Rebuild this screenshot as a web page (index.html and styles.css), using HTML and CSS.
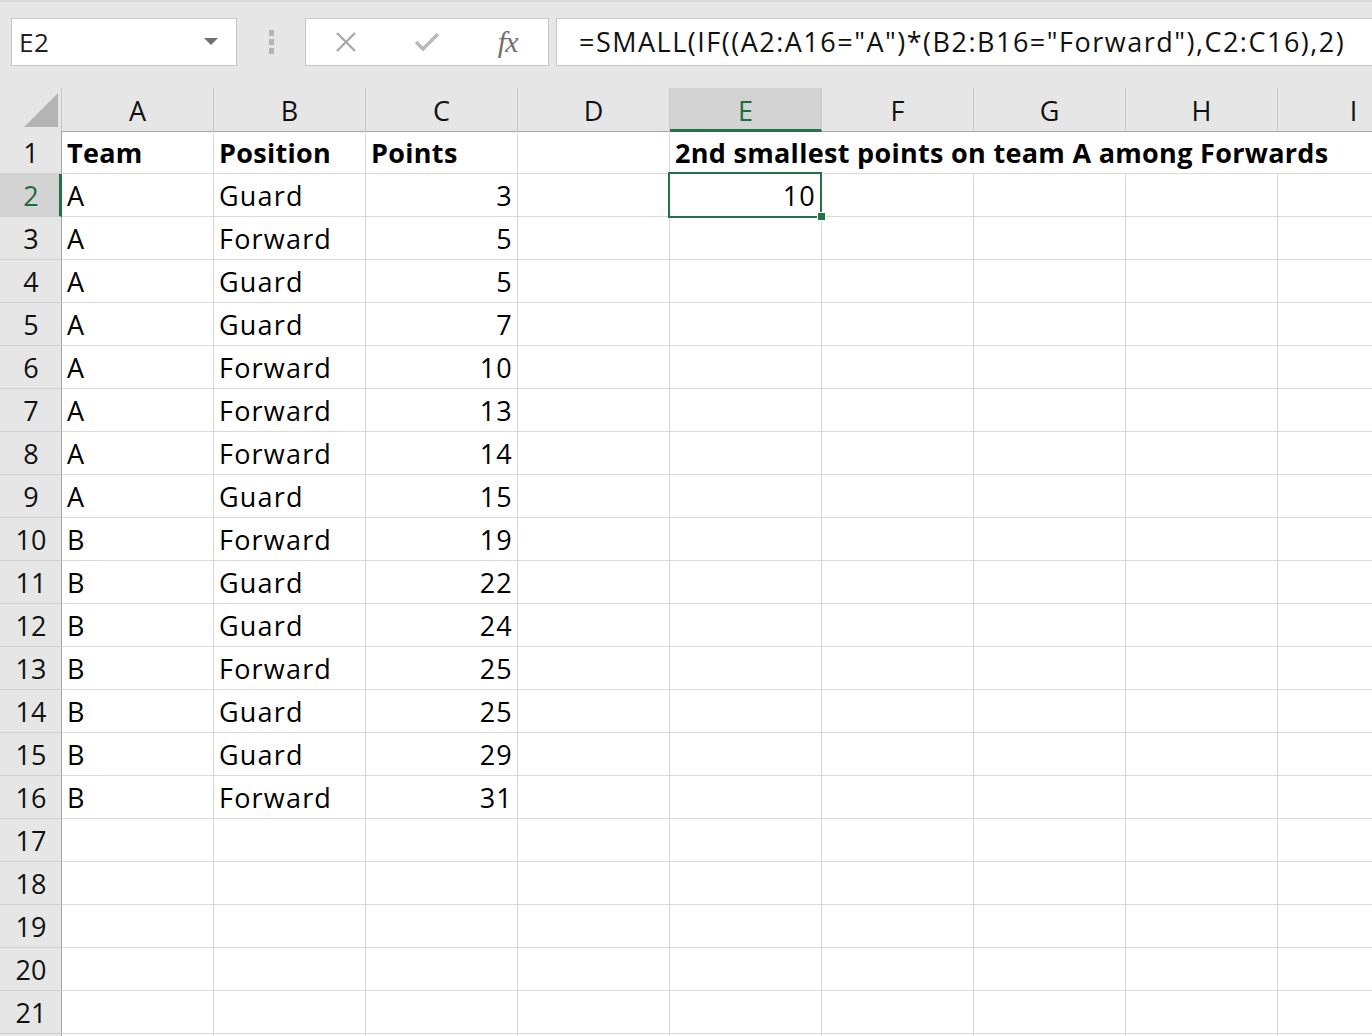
FILE: index.html
```html
<!DOCTYPE html>
<html>
<head>
<meta charset="utf-8">
<link rel="stylesheet" href="styles.css">
</head>
<body>
<div class="toolbar">
  <div class="namebox"><span class="nb-text">E2</span><svg class="nb-arrow" width="14" height="8" viewBox="0 0 14 8"><path d="M0 0 H14 L7 7 Z" fill="#6f6f6f"/></svg></div>
  <div class="grip"><i></i><i></i><i></i></div>
  <div class="fbtns">
    <div class="fbtn"><svg width="22" height="22" viewBox="0 0 22 22"><path d="M2 2 L20 20 M20 2 L2 20" stroke="#a9a9a9" stroke-width="2.4" fill="none"/></svg></div>
    <div class="fbtn"><svg width="26" height="22" viewBox="0 0 26 22"><path d="M2 11 L9 18 L24 3" stroke="#b9b9b9" stroke-width="3.4" fill="none"/></svg></div>
    <div class="fbtn"><span class="fx">fx</span></div>
  </div>
  <div class="fbox">=SMALL(IF((A2:A16="A")*(B2:B16="Forward"),C2:C16),2)</div>
</div>
<div class="sheet">
  <div class="row hrow">
    <div class="corner"><svg width="61" height="42" viewBox="0 0 61 42"><path d="M24 39 H58 V5 Z" fill="#b4b4b4"/></svg></div>
    <div class="ch">A</div><div class="ch">B</div><div class="ch">C</div><div class="ch">D</div><div class="ch ch-sel">E</div><div class="ch">F</div><div class="ch">G</div><div class="ch">H</div><div class="ch">I</div>
  </div>
  <div class="row"><div class="rh">1</div><div class="c b">Team</div><div class="c b">Position</div><div class="c b">Points</div><div class="c"></div><div class="c b span5">2nd smallest points on team A among Forwards</div></div>
  <div class="row"><div class="rh rh-sel">2</div><div class="c">A</div><div class="c">Guard</div><div class="c r">3</div><div class="c"></div><div class="c r sel">10<span class="handle"></span></div><div class="c"></div><div class="c"></div><div class="c"></div><div class="c"></div></div>
  <div class="row"><div class="rh">3</div><div class="c">A</div><div class="c">Forward</div><div class="c r">5</div><div class="c"></div><div class="c"></div><div class="c"></div><div class="c"></div><div class="c"></div><div class="c"></div></div>
  <div class="row"><div class="rh">4</div><div class="c">A</div><div class="c">Guard</div><div class="c r">5</div><div class="c"></div><div class="c"></div><div class="c"></div><div class="c"></div><div class="c"></div><div class="c"></div></div>
  <div class="row"><div class="rh">5</div><div class="c">A</div><div class="c">Guard</div><div class="c r">7</div><div class="c"></div><div class="c"></div><div class="c"></div><div class="c"></div><div class="c"></div><div class="c"></div></div>
  <div class="row"><div class="rh">6</div><div class="c">A</div><div class="c">Forward</div><div class="c r">10</div><div class="c"></div><div class="c"></div><div class="c"></div><div class="c"></div><div class="c"></div><div class="c"></div></div>
  <div class="row"><div class="rh">7</div><div class="c">A</div><div class="c">Forward</div><div class="c r">13</div><div class="c"></div><div class="c"></div><div class="c"></div><div class="c"></div><div class="c"></div><div class="c"></div></div>
  <div class="row"><div class="rh">8</div><div class="c">A</div><div class="c">Forward</div><div class="c r">14</div><div class="c"></div><div class="c"></div><div class="c"></div><div class="c"></div><div class="c"></div><div class="c"></div></div>
  <div class="row"><div class="rh">9</div><div class="c">A</div><div class="c">Guard</div><div class="c r">15</div><div class="c"></div><div class="c"></div><div class="c"></div><div class="c"></div><div class="c"></div><div class="c"></div></div>
  <div class="row"><div class="rh">10</div><div class="c">B</div><div class="c">Forward</div><div class="c r">19</div><div class="c"></div><div class="c"></div><div class="c"></div><div class="c"></div><div class="c"></div><div class="c"></div></div>
  <div class="row"><div class="rh">11</div><div class="c">B</div><div class="c">Guard</div><div class="c r">22</div><div class="c"></div><div class="c"></div><div class="c"></div><div class="c"></div><div class="c"></div><div class="c"></div></div>
  <div class="row"><div class="rh">12</div><div class="c">B</div><div class="c">Guard</div><div class="c r">24</div><div class="c"></div><div class="c"></div><div class="c"></div><div class="c"></div><div class="c"></div><div class="c"></div></div>
  <div class="row"><div class="rh">13</div><div class="c">B</div><div class="c">Forward</div><div class="c r">25</div><div class="c"></div><div class="c"></div><div class="c"></div><div class="c"></div><div class="c"></div><div class="c"></div></div>
  <div class="row"><div class="rh">14</div><div class="c">B</div><div class="c">Guard</div><div class="c r">25</div><div class="c"></div><div class="c"></div><div class="c"></div><div class="c"></div><div class="c"></div><div class="c"></div></div>
  <div class="row"><div class="rh">15</div><div class="c">B</div><div class="c">Guard</div><div class="c r">29</div><div class="c"></div><div class="c"></div><div class="c"></div><div class="c"></div><div class="c"></div><div class="c"></div></div>
  <div class="row"><div class="rh">16</div><div class="c">B</div><div class="c">Forward</div><div class="c r">31</div><div class="c"></div><div class="c"></div><div class="c"></div><div class="c"></div><div class="c"></div><div class="c"></div></div>
  <div class="row"><div class="rh">17</div><div class="c"></div><div class="c"></div><div class="c"></div><div class="c"></div><div class="c"></div><div class="c"></div><div class="c"></div><div class="c"></div><div class="c"></div></div>
  <div class="row"><div class="rh">18</div><div class="c"></div><div class="c"></div><div class="c"></div><div class="c"></div><div class="c"></div><div class="c"></div><div class="c"></div><div class="c"></div><div class="c"></div></div>
  <div class="row"><div class="rh">19</div><div class="c"></div><div class="c"></div><div class="c"></div><div class="c"></div><div class="c"></div><div class="c"></div><div class="c"></div><div class="c"></div><div class="c"></div></div>
  <div class="row"><div class="rh">20</div><div class="c"></div><div class="c"></div><div class="c"></div><div class="c"></div><div class="c"></div><div class="c"></div><div class="c"></div><div class="c"></div><div class="c"></div></div>
  <div class="row"><div class="rh">21</div><div class="c"></div><div class="c"></div><div class="c"></div><div class="c"></div><div class="c"></div><div class="c"></div><div class="c"></div><div class="c"></div><div class="c"></div></div>
  <div class="row"><div class="rh"></div><div class="c"></div><div class="c"></div><div class="c"></div><div class="c"></div><div class="c"></div><div class="c"></div><div class="c"></div><div class="c"></div><div class="c"></div></div>
</div>
</body>
</html>
```
FILE: styles.css
```css
* { box-sizing: border-box; }
html, body {
  margin: 0;
  padding: 0;
  width: 1372px;
  height: 1036px;
  overflow: hidden;
  background: #ffffff;
  font-family: "Open Sans", "Noto Sans", sans-serif;
  color: #000;
}
.toolbar {
  height: 88px;
  background: #e6e6e6;
  border-top: 2px solid #d9d9d9;
  display: flex;
  align-items: flex-start;
  padding-top: 16px;
  padding-left: 11px;
}
.namebox {
  width: 226px;
  height: 48px;
  background: #fff;
  border: 1px solid #c6c6c6;
  display: flex;
  align-items: center;
  justify-content: space-between;
  padding: 0 18px 0 7px;
  flex: none;
}
.nb-text {
  font-size: 26px;
  letter-spacing: 0.5px;
  color: #222;
}
.grip {
  width: 68px;
  height: 48px;
  flex: none;
  display: flex;
  flex-direction: column;
  align-items: center;
  justify-content: center;
  gap: 3px;
}
.grip i {
  display: block;
  width: 5px;
  height: 6px;
  background: #b5b5b5;
}
.fbtns {
  width: 244px;
  height: 48px;
  flex: none;
  background: #fff;
  border: 1px solid #c6c6c6;
  display: flex;
  align-items: center;
}
.fbtn {
  width: 81px;
  height: 46px;
  display: flex;
  align-items: center;
  justify-content: center;
}
.fx {
  font-family: "Liberation Serif", "DejaVu Serif", serif;
  font-style: italic;
  font-size: 30px;
  color: #707070;
  letter-spacing: -1px;
}
.fbox {
  flex: 1;
  margin-left: 7px;
  margin-right: -4px;
  height: 48px;
  background: #fff;
  border: 1px solid #c6c6c6;
  padding-left: 22px;
  font-size: 27px;
  letter-spacing: 1.5px;
  line-height: 46px;
  color: #111;
  white-space: nowrap;
  overflow: hidden;
}
.sheet {
  width: 1372px;
}
.row {
  display: grid;
  grid-template-columns: 62px repeat(9, 152px);
  height: 43px;
  font-size: 27px;
}
.corner {
  background: #e6e6e6;
  border-right: 1px solid #c6c6c6;
  border-bottom: 1px solid #a6a6a6;
}
.corner svg { display: block; }
.ch {
  background: #e6e6e6;
  border-right: 1px solid #c6c6c6;
  border-bottom: 1px solid #a6a6a6;
  display: flex;
  align-items: center;
  justify-content: center;
  padding-top: 2px;
  color: #111;
}
.ch-sel {
  background: #d3d3d3;
  color: #1e6b41;
  border-bottom: 3px solid #217346;
  padding-top: 4px;
}
.rh {
  background: #e6e6e6;
  border-right: 1px solid #a6a6a6;
  border-bottom: 1px solid #cfcfcf;
  display: flex;
  align-items: center;
  justify-content: center;
  padding-left: 1px;
  color: #111;
}
.rh-sel {
  background: #d3d3d3;
  color: #1e6b41;
  border-right: 3px solid #217346;
  padding-left: 3px;
}
.c {
  border-right: 1px solid #d9d9d9;
  border-bottom: 1px solid #d9d9d9;
  padding: 0 5px;
  display: flex;
  align-items: center;
  white-space: nowrap;
  overflow: visible;
  letter-spacing: 1.2px;
}
.b {
  font-weight: 700;
  letter-spacing: 0.3px;
}
.r { justify-content: flex-end; padding-right: 4px; }
.span5 {
  grid-column: span 5;
  border-right: none;
}
.sel {
  position: relative;
  padding-right: 5px;
}
.sel::after {
  content: "";
  position: absolute;
  left: -2px;
  top: -2px;
  right: -1px;
  bottom: -2px;
  border: 2px solid #217346;
  pointer-events: none;
}
.handle {
  position: absolute;
  right: -5px;
  bottom: -5px;
  width: 9px;
  height: 9px;
  background: #217346;
  border: 1px solid #fff;
  z-index: 2;
}
```
